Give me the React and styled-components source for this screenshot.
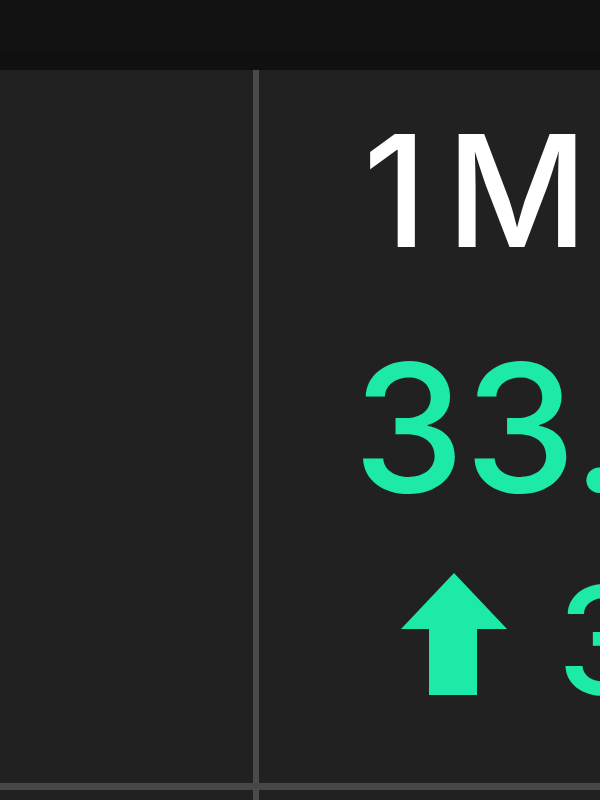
import React from "react";
import styled, { createGlobalStyle } from "styled-components";

const GlobalStyle = createGlobalStyle`
  html, body { margin: 0; padding: 0; background: #212121; }
  body { font-family: Inter, "Liberation Sans", Arial, sans-serif; }
`;

const Page = styled.div`
  width: 600px;
  height: 800px;
  display: flex;
  flex-direction: column;
  overflow: hidden;
  background: #212121;
`;

const TopBar = styled.header`
  height: 52px;
  flex: none;
  background: #121212;
  border-bottom: 18px solid #101010;
`;

const Row = styled.div`
  display: flex;
  flex: none;
  height: ${(p) => p.$h}px;
`;

const SidePanel = styled.aside`
  width: 253px;
  flex: none;
  background: #212121;
`;

const Divider = styled.div`
  width: 6px;
  flex: none;
  background: #4a4a4a;
`;

const StatPanel = styled.section`
  flex: 1;
  min-width: 0;
  overflow: hidden;
  background: #212121;
  padding: 43px 0 0 94px;
  display: flex;
  flex-direction: column;
  white-space: nowrap;
  font-family: Inter, "Liberation Sans", Arial, sans-serif;
  font-weight: 500;
`;

const HRule = styled.div`
  height: 7px;
  flex: none;
  background: #474747;
`;

const Label = styled.div`
  color: #ffffff;
  font-size: 155px;
  line-height: 1;
  margin-left: 10px;
`;

const LabelNum = styled.span`
  margin-right: 19px;
`;

const Value = styled.div`
  color: #1de9a8;
  font-size: 178px;
  line-height: 1;
  margin: 71px 0 0 0;
`;

const Change = styled.div`
  display: flex;
  align-items: flex-end;
  gap: 50px;
  margin: 49px 0 0 48px;
  color: #1de9a8;
  font-size: 150px;
  line-height: 1;
`;

const ArrowIcon = styled.svg`
  width: 106px;
  height: 122px;
  flex: none;
  margin-bottom: 21px;
  fill: #1de9a8;
`;

const ChangeText = styled.span``;

export default function App() {
  return (
    <>
      <GlobalStyle />
      <Page>
        <TopBar />
        <Row $h={713}>
          <SidePanel />
          <Divider />
          <StatPanel>
            <Label>
              <LabelNum>1</LabelNum>M
            </Label>
            <Value>33.52</Value>
            <Change>
              <ArrowIcon viewBox="0 0 106 122">
                <path d="M53 0 L106 56 L76 56 L76 122 L28 122 L28 56 L0 56 Z" />
              </ArrowIcon>
              <ChangeText>3.1%</ChangeText>
            </Change>
          </StatPanel>
        </Row>
        <HRule />
        <Row $h={10}>
          <SidePanel />
          <Divider />
          <StatPanel />
        </Row>
      </Page>
    </>
  );
}
